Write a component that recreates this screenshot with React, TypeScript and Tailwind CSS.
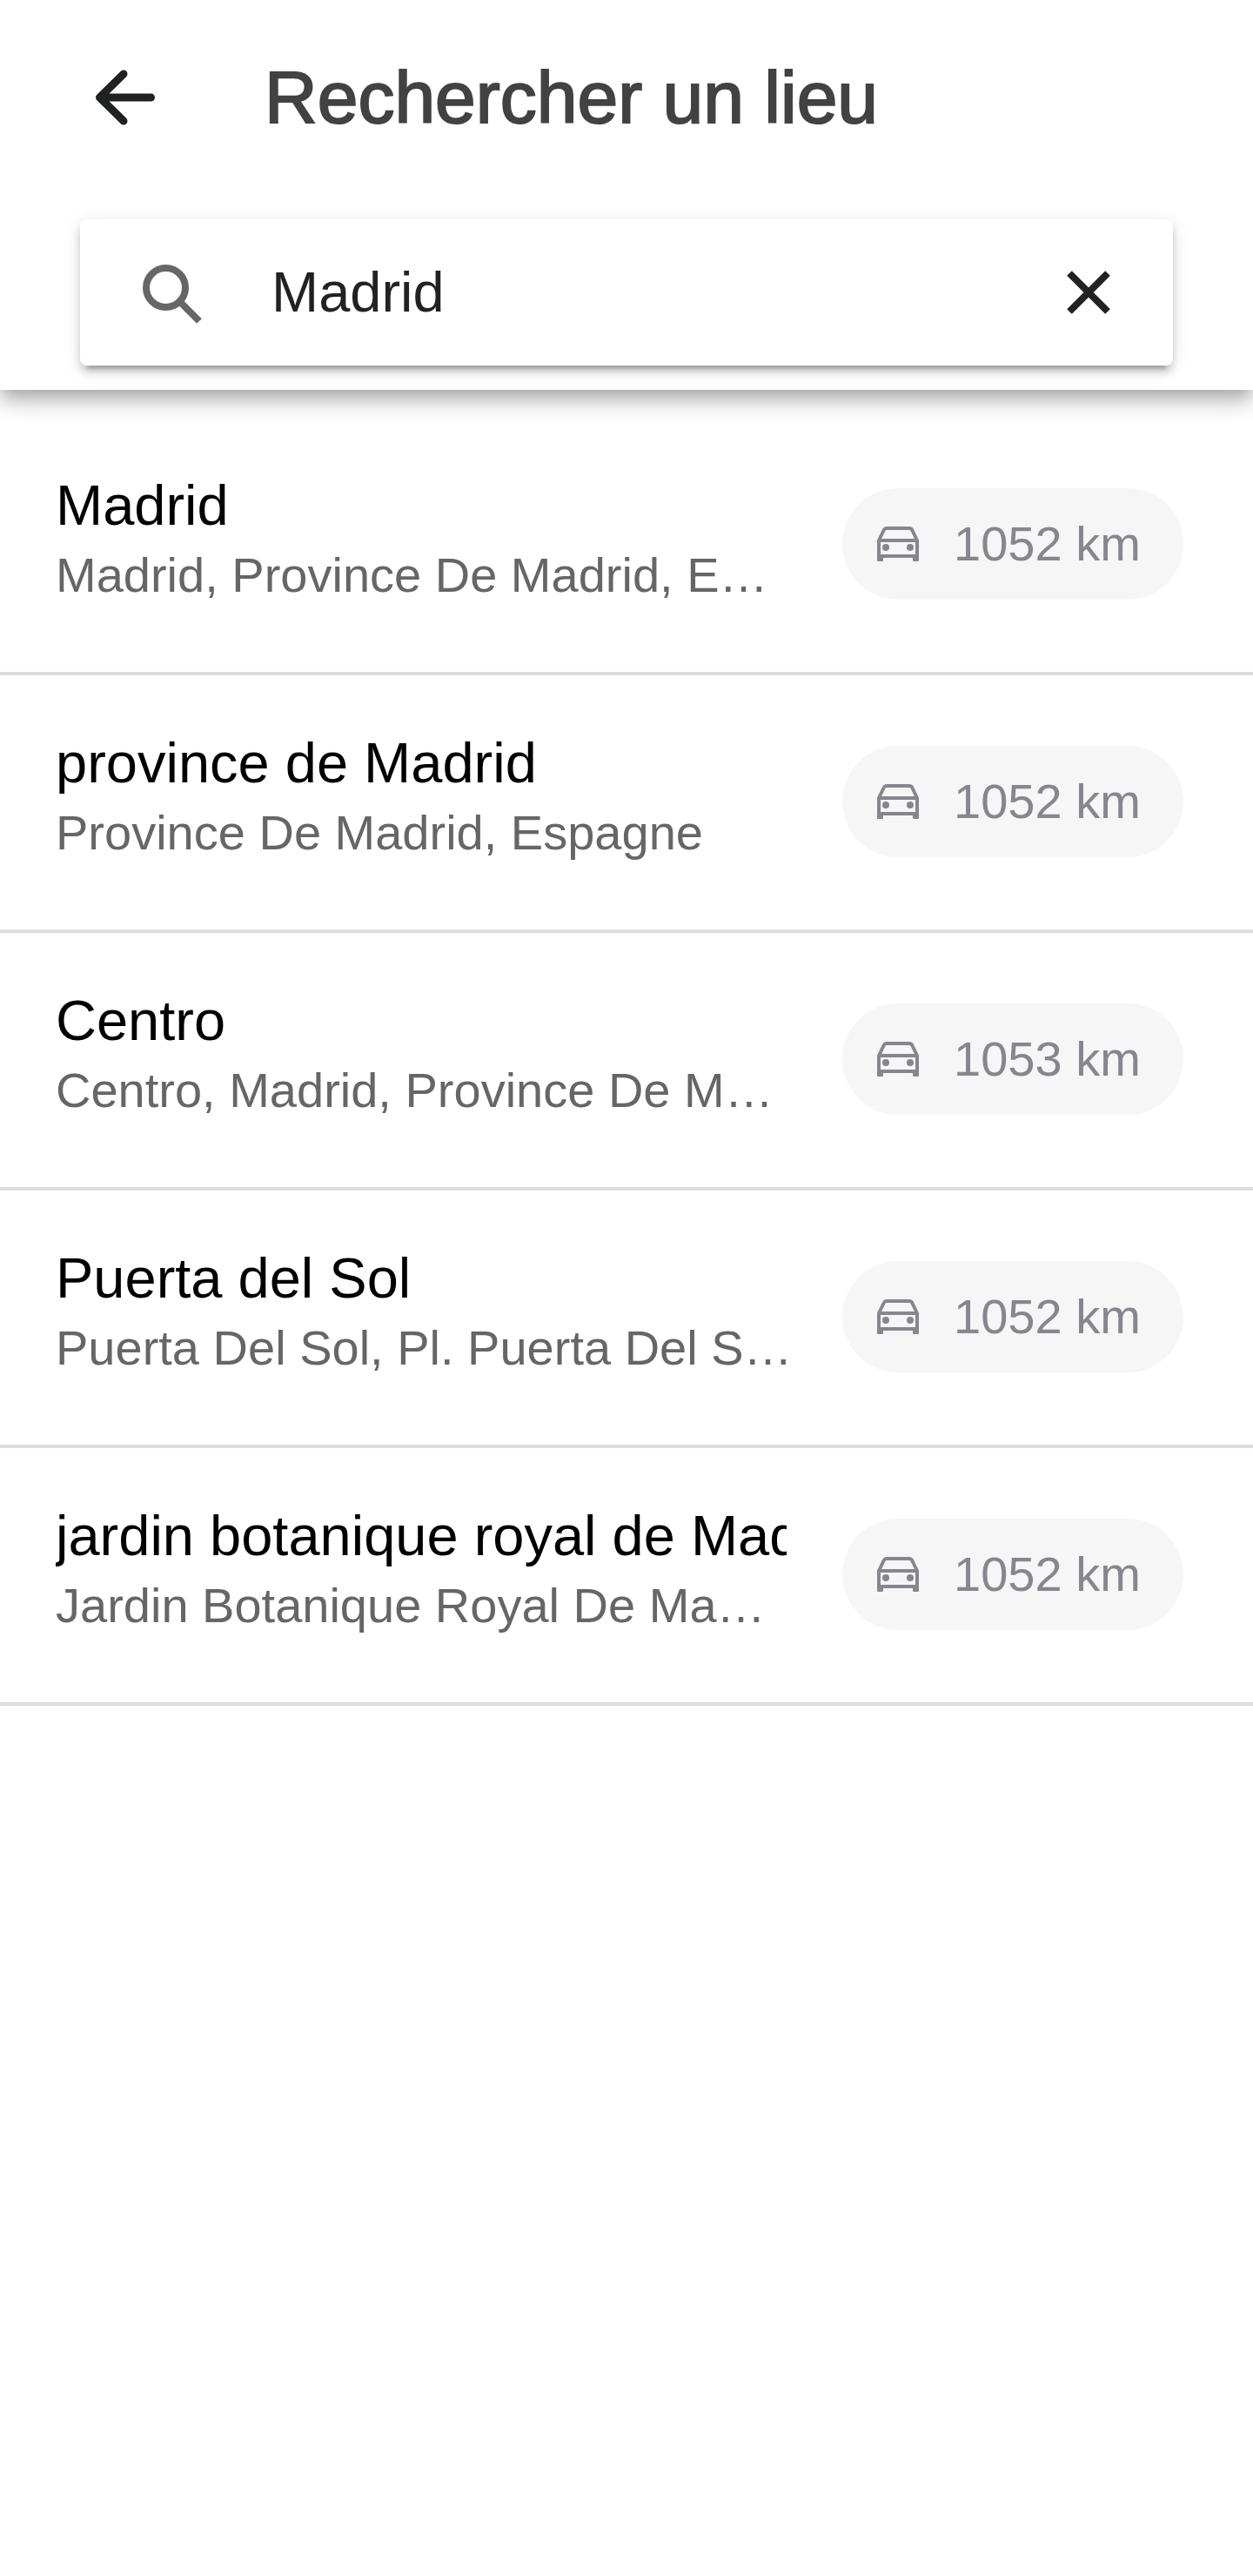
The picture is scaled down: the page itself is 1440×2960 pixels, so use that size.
import { useState } from 'react';

interface Place {
  name: string;
  address: string;
  distance: number;
}

// Addresses are already shortened to one line
const PLACES: Place[] = [
  { name: 'Madrid', address: 'Madrid, Province De Madrid, E…', distance: 1052 },
  { name: 'province de Madrid', address: 'Province De Madrid, Espagne', distance: 1052 },
  { name: 'Centro', address: 'Centro, Madrid, Province De M…', distance: 1053 },
  { name: 'Puerta del Sol', address: 'Puerta Del Sol, Pl. Puerta Del S…', distance: 1052 },
  { name: 'jardin botanique royal de Madrid', address: 'Jardin Botanique Royal De Ma…', distance: 1052 },
];

function ArrowIcon() {
  return (
    <svg viewBox="0 0 96 96" className="size-24" fill="none" stroke="#202124" strokeWidth="9" strokeLinecap="round" strokeLinejoin="round" aria-hidden="true">
      <path d="M46 21 18.5 48 46 75M20 48H77.500" />
    </svg>
  );
}

function SearchIcon() {
  return (
    <svg viewBox="0 -4 68 72" className="h-[72px] w-[68px] shrink-0" fill="none" stroke="#666666" strokeWidth="8" aria-hidden="true">
      <circle cx="26.5" cy="26.5" r="22.5" />
      <path d="M42 42 65 65" />
    </svg>
  );
}

function CloseIcon() {
  return (
    <svg viewBox="0 0 50 50" className="size-[50px]" fill="none" stroke="#222222" strokeWidth="8" aria-hidden="true">
      <path d="M3 3 47 47M47 3 3 47" />
    </svg>
  );
}

function CarIcon() {
  return (
    <svg viewBox="0 0 48 40" className="h-10 w-12 shrink-0" fill="none" stroke="#87868c" strokeWidth="4" aria-hidden="true">
      <path d="M2 38V16L7.500 4.500Q8.500 2 11 2H37Q39.500 2 40.500 4.500L46 16V38M2 16H46M2 34H46" strokeLinejoin="round" strokeLinecap="round" />
      <path d="M0 34H7V38.500Q7 40 5.500 40H1.500Q0 40 0 38.500ZM41 34H48V38.500Q48 40 46.500 40H42.500Q41 40 41 38.500Z" fill="#87868c" stroke="none" />
      <circle cx="10" cy="24" r="4" fill="#87868c" stroke="none" />
      <circle cx="38" cy="24" r="4" fill="#87868c" stroke="none" />
    </svg>
  );
}

export default function App() {
  const [query, setQuery] = useState('Madrid');

  return (
    <div className="min-h-screen bg-white font-['Liberation_Sans',Arial,sans-serif]">
      <header className="relative bg-white pt-14 pb-7 shadow-[0_8px_16px_-4px_rgba(0,0,0,0.2),0_16px_20px_0_rgba(0,0,0,0.14),0_4px_40px_0_rgba(0,0,0,0.12)]">
        <div className="flex h-28 items-center gap-28 px-24">
          <button type="button" aria-label="Retour">
            <ArrowIcon />
          </button>
          <h1 className="text-[84px] leading-[116px] whitespace-nowrap text-[#424242] [-webkit-text-stroke:2px_#424242]">
            Rechercher un lieu
          </h1>
        </div>

        <form
          role="search"
          onSubmit={e => e.preventDefault()}
          className="mx-[92px] mt-[84px] flex h-[168px] items-center gap-20 rounded-lg bg-white px-[72px] shadow-[0_12px_4px_-8px_rgba(0,0,0,0.2),0_8px_8px_0_rgba(0,0,0,0.14),0_4px_20px_0_rgba(0,0,0,0.12)]"
        >
          <SearchIcon />
          <input
            type="text"
            aria-label="Rechercher un lieu"
            value={query}
            onChange={e => setQuery(e.target.value)}
            className="min-w-0 flex-1 bg-transparent text-[65px] leading-[80px] text-[#222222] outline-none"
          />
          <button type="button" aria-label="Effacer" onClick={() => setQuery('')}>
            <CloseIcon />
          </button>
        </form>
      </header>

      <ul className="pt-8">
        {PLACES.map(place => (
          <li key={place.name} className="flex items-start gap-16 border-b-4 border-[#dddddd] pt-[61px] pr-20 pb-[71px] pl-16">
            <div className="min-w-0 flex-1">
              <div className="overflow-hidden text-[65px] leading-[80px] whitespace-nowrap text-black">{place.name}</div>
              <div className="overflow-hidden text-[56px] leading-[80px] whitespace-nowrap text-[#666666]">{place.address}</div>
            </div>
            <div className="mt-5 flex h-32 w-[392px] shrink-0 items-center gap-10 rounded-full bg-[#f6f6f6] pl-10 text-[56px] whitespace-nowrap text-[#87868c]">
              <CarIcon />
              <span>{place.distance} km</span>
            </div>
          </li>
        ))}
      </ul>
    </div>
  );
}
